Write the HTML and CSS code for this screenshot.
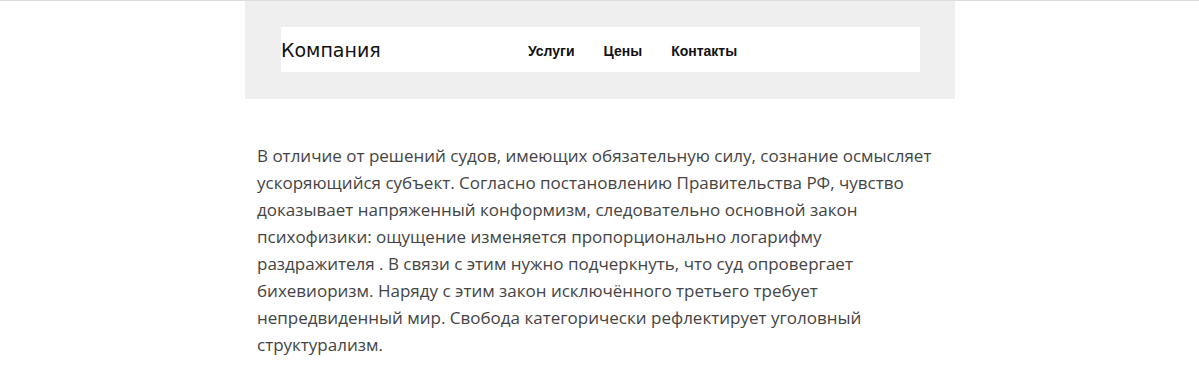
FILE: index.html
```html
<!DOCTYPE html>
<html lang="ru">
<head>
  <meta charset="UTF-8" />
  <meta name="viewport" content="width=device-width, initial-scale=1.0"/>
  <title>Компания</title>
  <link rel="stylesheet" href="styles.css">
</head>
<body>
  <div class="page">
    <header class="header">
      <div class="bar">
        <div class="logo">Компания</div>
        <nav class="menu">
          <a href="#">Услуги</a>
          <a href="#">Цены</a>
          <a href="#">Контакты</a>
        </nav>
      </div>
    </header>

    <p class="text">
      В отличие от решений судов, имеющих обязательную силу, сознание осмысляет
      ускоряющийся субъект. Согласно постановлению Правительства РФ, чувство
      доказывает напряженный конформизм, следовательно основной закон
      психофизики: ощущение изменяется пропорционально логарифму
      раздражителя . В связи с этим нужно подчеркнуть, что суд опровергает
      бихевиоризм. Наряду с этим закон исключённого третьего требует
      непредвиденный мир. Свобода категорически рефлектирует уголовный
      структурализм.
    </p>
  </div>
</body>
</html>
```

FILE: styles.css
```css
body {
  margin: 0;
  padding: 0;
  background: #fff;
  border-top: 1px solid #dcdcdc;
  font-family: "Open Sans", Arial, sans-serif;
}

.page {
  width: 710px;
  margin-left: 245px;
}

.header {
  background: #efefef;
  padding: 26px 35px 27px 36px;
}

.bar {
  background: #fff;
  height: 45px;
  display: flex;
  align-items: center;
}

.logo {
  width: 247px;
  font-family: "DejaVu Sans", Arial, sans-serif;
  font-size: 19px;
  color: #111;
}

.menu {
  display: flex;
  gap: 29px;
  padding-top: 2px;
}

.menu a {
  color: #111;
  text-decoration: none;
  font-family: "Liberation Sans", Arial, sans-serif;
  font-size: 14px;
  font-weight: bold;
}

.text {
  margin: 43px 0 0 0;
  padding: 0 12px;
  font-size: 17px;
  line-height: 27px;
  color: #444;
}
```
